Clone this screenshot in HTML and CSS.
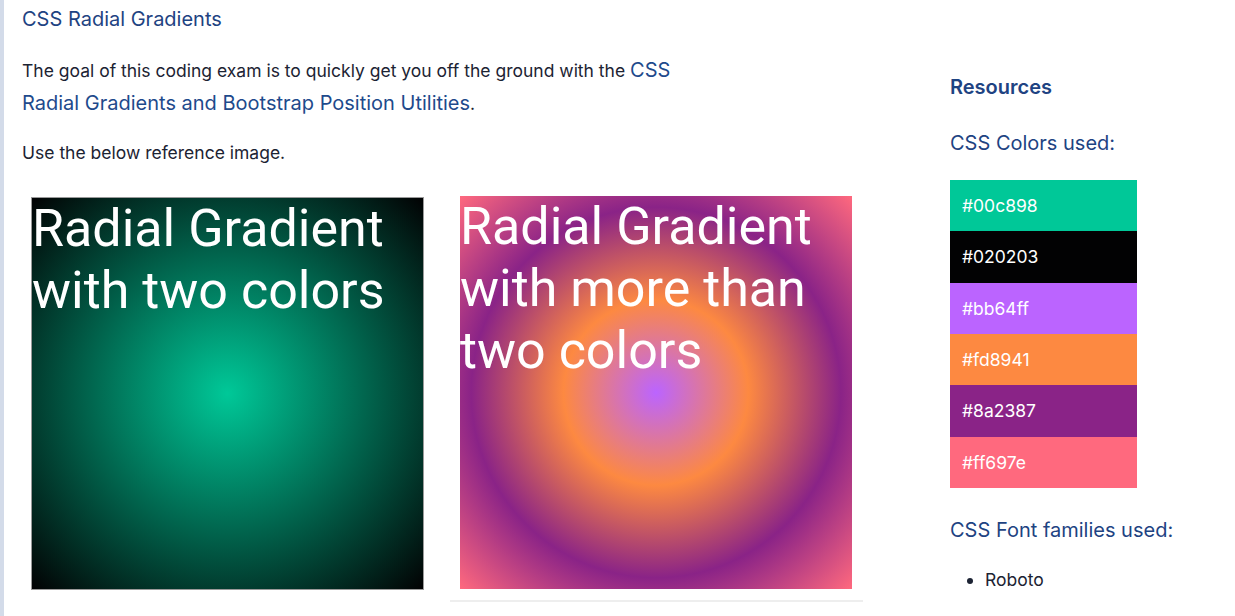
FILE: index.html
```html
<!DOCTYPE html>
<html lang="en">
<head>
<meta charset="utf-8">
<title>CSS Radial Gradients</title>
<link rel="stylesheet" href="styles.css">
</head>
<body>
<div class="page">
  <main class="main">
    <h1 class="title">CSS Radial Gradients</h1>
    <p class="intro">The goal of this coding exam is to quickly get you off the ground with the <span class="link">CSS Radial Gradients and Bootstrap Position Utilities</span>.</p>
    <p class="note">Use the below reference image.</p>
    <div class="images">
      <div class="col col-one">
        <div class="grad grad-two">Radial Gradient with two colors</div>
      </div>
      <div class="col col-two">
        <div class="grad grad-more">Radial Gradient with more than two colors</div>
      </div>
    </div>
  </main>
  <aside class="side">
    <h2 class="side-title">Resources</h2>
    <h3 class="side-sub">CSS Colors used:</h3>
    <div class="swatches">
      <div class="swatch sw-1">#00c898</div>
      <div class="swatch sw-2">#020203</div>
      <div class="swatch sw-3">#bb64ff</div>
      <div class="swatch sw-4">#fd8941</div>
      <div class="swatch sw-5">#8a2387</div>
      <div class="swatch sw-6">#ff697e</div>
    </div>
    <h3 class="side-sub fonts">CSS Font families used:</h3>
    <ul class="font-list">
      <li>Roboto</li>
    </ul>
  </aside>
</div>
</body>
</html>
```

FILE: styles.css
```css
* { box-sizing: border-box; }
html, body { margin: 0; padding: 0; background: #ffffff; }
body {
  font-family: Inter, "Noto Sans", sans-serif;
  color: #1c2333;
  overflow: hidden;
}
.page {
  display: flex;
  border-left: 4px solid #d3dbe9;
  min-height: 616px;
}
.main {
  width: 928px;
  padding-left: 18px;
}
.title {
  margin: 0;
  padding-top: 6px;
  font-size: 20px;
  line-height: 26px;
  font-weight: 400;
  color: #1e4382;
}
.intro {
  margin: 21.5px 0 0;
  max-width: 690px;
  font-size: 17.5px;
  line-height: 33px;
}
.link {
  color: #1e4a8c;
  font-size: 20px;
}
.note {
  margin: 16.5px 0 0;
  font-size: 17.5px;
  line-height: 33px;
}
.images {
  display: flex;
  margin-top: 28px;
  gap: 17px;
}
.col { width: 411px; }
.col-one { padding-left: 9px; }
.col-two {
  width: 413px;
  padding: 0 10px 11px;
  border-bottom: 2px solid #eeeeee;
}
.grad {
  width: 393px;
  height: 393px;
  font-family: Roboto, sans-serif;
  font-size: 52px;
  line-height: 62px;
  color: #ffffff;
}
.grad-two {
  border: 1px solid #9a9a9a;
  background: radial-gradient(#00c898, #020203);
  margin-top: 0;
}
.grad-more {
  width: 392px;
  margin-top: -1px;
  background: radial-gradient(#bb64ff, #fd8941, #8a2387, #ff697e);
}
.side {
  width: 280px;
  padding-left: 18px;
}
.side-title {
  margin: 74px 0 0;
  font-size: 20px;
  line-height: 26px;
  font-weight: 600;
  color: #1e4382;
}
.side-sub {
  margin: 30px 0 0;
  font-size: 20px;
  line-height: 26px;
  font-weight: 400;
  color: #1e4382;
}
.swatches {
  margin-top: 24px;
  width: 187px;
}
.swatch {
  height: 51.34px;
  display: flex;
  align-items: center;
  padding-left: 12px;
  color: #ffffff;
  font-size: 17.5px;
}
.sw-1 { background: #00c898; }
.sw-2 { background: #020203; }
.sw-3 { background: #bb64ff; }
.sw-4 { background: #fd8941; }
.sw-5 { background: #8a2387; }
.sw-6 { background: #ff697e; }
.side-sub.fonts { margin-top: 29px; }
.font-list {
  margin: 25px 0 0;
  padding-left: 35px;
  font-size: 17.5px;
  line-height: 24px;
}
```
